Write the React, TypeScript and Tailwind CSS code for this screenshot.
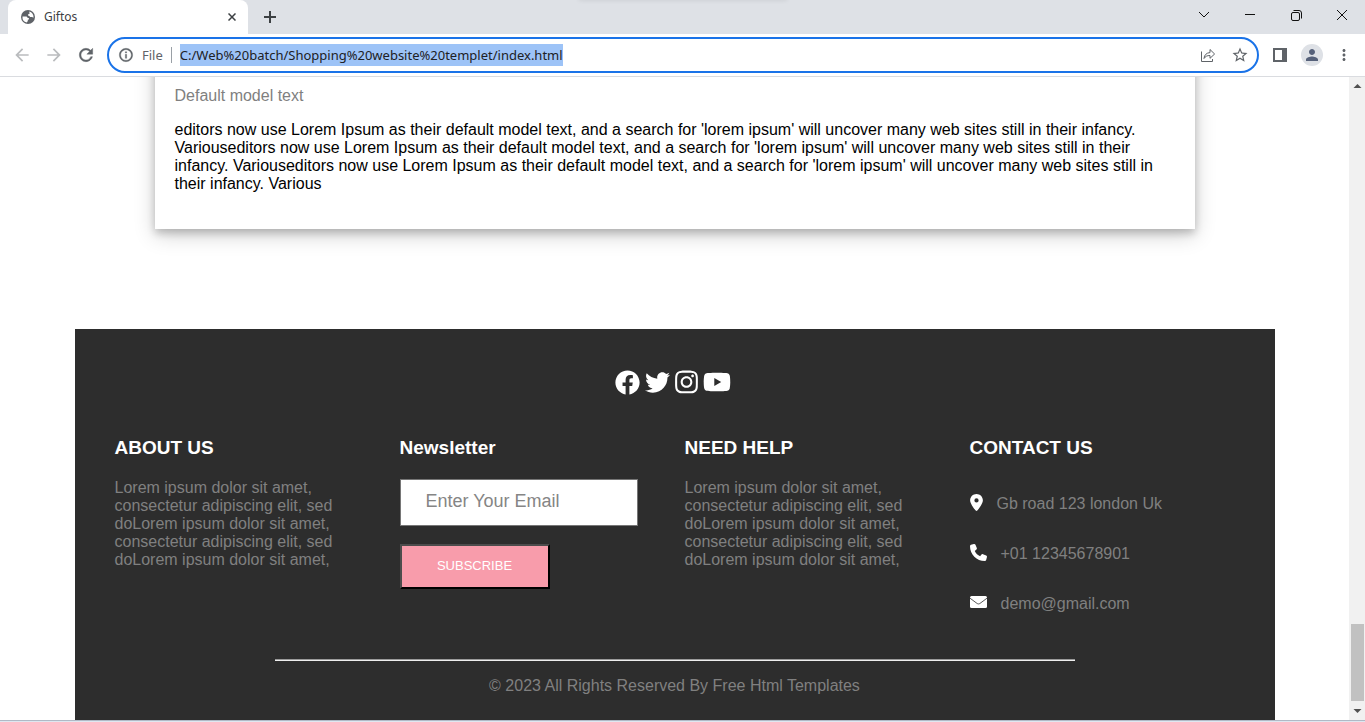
import type { ReactNode } from 'react';
import { FaFacebook } from 'react-icons/fa';
import { FaInstagram, FaLocationDot, FaPhone, FaTwitter, FaYoutube } from 'react-icons/fa6';
import {
  MdArrowBack,
  MdArrowForward,
  MdInfoOutline,
  MdMoreVert,
  MdPerson,
  MdRefresh,
  MdStarBorder,
} from 'react-icons/md';

const LOREM =
  'Lorem ipsum dolor sit amet, consectetur adipiscing elit, sed doLorem ipsum dolor sit amet, consectetur adipiscing elit, sed doLorem ipsum dolor sit amet,';

function GlobeIcon() {
  return (
    <svg viewBox="0 0 14 14" className="size-[14px] shrink-0" aria-hidden>
      <circle cx="7" cy="7" r="7" fill="#5f6368" />
      <path
        fill="#fff"
        d="M1.500 6.500h3.200c1.300 0 1.700.6 1.900 1.400h1.200c.5.9-.1 1.700-1 1.900v1.300l-1 1.400A5.600 5.600 0 0 1 1.500 6.500z"
      />
      <path fill="#fff" d="M8.200 1.600A5.600 5.600 0 0 1 12.500 7.800c-.5-.6-1.100-.9-1.900-.9H9.100c-.4-.9-1-1.200-2-1.200V4.500c.2-.6.700-.8 1.500-.8z" />
    </svg>
  );
}

function TabStrip() {
  return (
    <header className="relative flex h-[34px] shrink-0 items-stretch overflow-hidden bg-[#dee1e6] pl-2">
      <div className="absolute -top-2 left-1/2 h-2 w-52 -translate-x-1/2 shadow-[0_0_5px_rgba(0,0,0,0.1)]" />
      <div className="flex w-60 items-center rounded-t-lg bg-white pr-2 pl-[13px] text-[#3c4043]">
        <GlobeIcon />
        <span className="ml-[9px] flex-1 text-xs">Giftos</span>
        <button type="button" aria-label="Close tab" className="flex size-4 items-center justify-center">
          <svg viewBox="0 0 8 8" className="size-2" stroke="currentColor" strokeWidth="1.5">
            <path d="M.5.5l7 7M7.500.5l-7 7" />
          </svg>
        </button>
      </div>
      <button type="button" aria-label="New tab" className="flex w-11 items-center justify-center text-[#3c4043]">
        <svg viewBox="0 0 12 12" className="size-3" stroke="currentColor" strokeWidth="2">
          <path d="M6 0v12M0 6h12" />
        </svg>
      </button>
      <div className="ml-auto flex text-[#111]">
        <button type="button" aria-label="Search tabs" className="flex w-[46px] items-center justify-center pb-1">
          <svg viewBox="0 0 12 12" className="size-3" fill="none" stroke="currentColor">
            <path d="M1 3l5 5 5-5" />
          </svg>
        </button>
        <button type="button" aria-label="Minimize" className="flex w-[46px] items-center justify-center pb-1">
          <svg viewBox="0 0 10 10" className="size-[10px]" stroke="currentColor">
            <path d="M0 4.500h10" />
          </svg>
        </button>
        <button type="button" aria-label="Restore" className="flex w-[46px] items-center justify-center pb-1">
          <svg viewBox="0 0 12 12" className="size-3" fill="none" stroke="currentColor">
            <rect x="1.500" y="3.500" width="8" height="8" rx="1.500" />
            <path d="M3.500 1.500h5.500a2.500 2.500 0 0 1 2.500 2.500v5.500" />
          </svg>
        </button>
        <button type="button" aria-label="Close" className="flex w-[46px] items-center justify-center pb-1">
          <svg viewBox="0 0 10 10" className="size-[10px]" stroke="currentColor">
            <path d="M0 0l10 10M10 0L0 10" />
          </svg>
        </button>
      </div>
    </header>
  );
}

function Toolbar() {
  return (
    <nav className="flex h-[43px] shrink-0 items-center border-b border-[#dadce0] bg-white px-3 text-[#5f6368]">
      <button type="button" aria-label="Back" className="mr-3 text-[#babcbe]">
        <MdArrowBack className="size-5" />
      </button>
      <button type="button" aria-label="Forward" className="mr-3 text-[#babcbe]">
        <MdArrowForward className="size-5" />
      </button>
      <button type="button" aria-label="Reload" className="mr-[11px]">
        <MdRefresh className="size-5 [&>path:last-child]:stroke-[0.5]" />
      </button>
      <div className="flex h-9 flex-1 items-center rounded-full border-2 border-[#1a73e8] pr-2 pl-[9px]">
        <MdInfoOutline className="size-4 shrink-0 [&>path:last-child]:stroke-[0.5]" aria-hidden />
        <label htmlFor="address" className="ml-2 border-r border-[#9aa0a6] pr-2 text-[13px] leading-4">
          File
        </label>
        <div className="ml-2 flex flex-1">
          <input
            id="address"
            type="text"
            defaultValue="C:/Web%20batch/Shopping%20website%20templet/index.html"
            className="field-sizing-content h-[22px] bg-[#9dc3f7] text-[13px] leading-[22px] text-[#202124] outline-none"
          />
        </div>
        <button type="button" aria-label="Share" className="mr-[15px]">
          <svg viewBox="0 0 16 16" className="size-4" fill="none" stroke="currentColor">
            <path d="M1.500 4.500v10h11V12" />
            <path d="M4 11.500c.3-3.600 2.500-5.700 6-5.900V2.500l4.600 4.500L10 11.300V8.500c-2.700-.1-4.700.9-6 3z" />
          </svg>
        </button>
        <button type="button" aria-label="Bookmark">
          <MdStarBorder className="size-[18px]" />
        </button>
      </div>
      <button type="button" aria-label="Side panel" className="ml-[14px]">
        <svg viewBox="0 0 14 14" className="size-[14px]">
          <path fill="currentColor" fillRule="evenodd" d="M0 0h14v14H0zM2 2v10h7V2z" />
        </svg>
      </button>
      <button
        type="button"
        aria-label="Profile"
        className="ml-[14px] flex size-[22px] items-center justify-center rounded-full bg-[#dee1e6] text-[#56617a]"
      >
        <MdPerson className="size-[18px]" />
      </button>
      <button type="button" aria-label="Menu" className="ml-3">
        <MdMoreVert className="size-[18px]" />
      </button>
    </nav>
  );
}

function Scrollbar() {
  return (
    <div className="flex w-4 shrink-0 flex-col items-center bg-[#f1f1f1] text-[#505050]">
      <svg viewBox="0 0 16 17" className="h-[17px] w-4" fill="currentColor" aria-hidden>
        <path d="M4.500 11L8.500 7l4 4z" />
      </svg>
      <div className="flex-1" />
      <div className="h-[77px] w-[13px] bg-[#c1c1c1]" />
      <svg viewBox="0 0 16 19" className="h-[19px] w-4" fill="currentColor" aria-hidden>
        <path d="M4.500 8L8.500 12l4-4z" />
      </svg>
    </div>
  );
}

function Column({ title, children }: { title: string; children: ReactNode }) {
  return (
    <section className="pr-[47px]">
      <h2 className="text-[19px] leading-[22px] font-bold text-white">{title}</h2>
      {children}
    </section>
  );
}

function EnvelopeIcon() {
  return (
    <svg viewBox="0 0 17 17" className="size-[17px]" aria-hidden>
      <rect y="2" width="17" height="12" rx="1.500" fill="currentColor" />
      <path d="M0 4.200l7 5.200c1 .7 2 .7 3 0l7-5.200" fill="none" stroke="#2d2d2d" strokeWidth=".8" />
    </svg>
  );
}

function Footer() {
  return (
    <footer className="mx-auto mt-[100px] max-w-[1200px] bg-[#2d2d2d] pt-10 pb-10 text-[#808080]">
      <div className="flex h-[26px] items-center justify-center gap-[5px] pr-1 text-white">
        <a href="#facebook" aria-label="Facebook">
          <FaFacebook className="size-[25px]" />
        </a>
        <a href="#twitter" aria-label="Twitter">
          <FaTwitter className="size-[25px]" />
        </a>
        <a href="#instagram" aria-label="Instagram">
          <FaInstagram className="h-[26px] w-[23px]" />
        </a>
        <a href="#youtube" aria-label="YouTube">
          <FaYoutube className="h-[26px] w-7" />
        </a>
      </div>
      <div className="mt-[42px] grid grid-cols-4 pr-5 pl-10">
        <Column title="ABOUT US">
          <p className="mt-5">{LOREM}</p>
        </Column>
        <Column title="Newsletter">
          <form className="mt-5">
            <input
              type="email"
              aria-label="Email"
              placeholder="Enter Your Email"
              className="h-[47px] w-full border border-[#767676] bg-white px-[25px] pb-[2px] text-lg placeholder:text-[#858585]"
            />
            <button
              type="button"
              className="mt-[18px] block h-[45px] w-[150px] border-2 border-t-[#4c4c4c] border-r-black border-b-black border-l-[#4c4c4c] bg-[#f89cab] pb-[2px] text-[13px] text-white"
            >
              SUBSCRIBE
            </button>
          </form>
        </Column>
        <Column title="NEED HELP">
          <p className="mt-5">{LOREM}</p>
        </Column>
        <Column title="CONTACT US">
          <ul className="mt-9 flex flex-col gap-8 [&_svg]:-mt-px [&_svg]:text-white">
            <li className="flex gap-[14px]">
              <FaLocationDot className="h-[17px] w-[13px]" />
              Gb road 123 london Uk
            </li>
            <li className="flex gap-[14px]">
              <FaPhone className="size-[17px]" />
              +01 12345678901
            </li>
            <li className="flex gap-[14px]">
              <EnvelopeIcon />
              demo@gmail.com
            </li>
          </ul>
        </Column>
      </div>
      <hr className="mx-auto mt-[46px] h-[2px] w-2/3 border-t border-b border-t-[#9a9a9a] border-b-[#eeeeee]" />
      <p className="mt-4 text-center">© 2023 All Rights Reserved By Free Html Templates</p>
    </footer>
  );
}

export default function App() {
  return (
    <div className="flex h-screen flex-col bg-white font-['Noto_Sans','Open_Sans',sans-serif]">
      <TabStrip />
      <Toolbar />
      <div className="flex min-h-0 flex-1">
        <main className="flex-1 overflow-hidden font-['Liberation_Sans',Arial,sans-serif] text-base leading-[18px] text-black">
          <article className="mx-auto -mt-10 max-w-[1040px] px-5 pt-[50px] pb-9 shadow-[0_4px_8px_0_rgba(0,0,0,0.2),0_6px_20px_0_rgba(0,0,0,0.19)]">
            <h3 className="text-[#808080]">Default model text</h3>
            <p className="mt-4">
              editors now use Lorem Ipsum as their default model text, and a search for 'lorem ipsum' will uncover many
              web sites still in their infancy. Variouseditors now use Lorem Ipsum as their default model text, and a
              search for 'lorem ipsum' will uncover many web sites still in their infancy. Variouseditors now use Lorem
              Ipsum as their default model text, and a search for 'lorem ipsum' will uncover many web sites still in
              their infancy. Various
            </p>
          </article>
          <Footer />
        </main>
        <Scrollbar />
      </div>
      <div className="h-[2px] shrink-0 border-t border-[#b1b9c6] bg-[#dfe7f0]" />
    </div>
  );
}
